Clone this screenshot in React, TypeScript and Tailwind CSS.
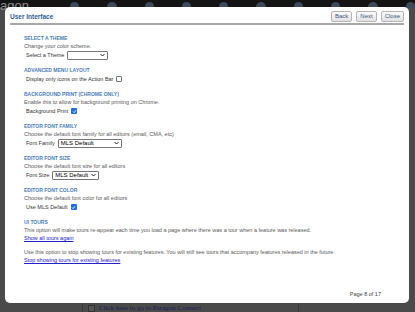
import React from 'react';

function Heading({ children }: { children: React.ReactNode }) {
  return <div className="font-bold uppercase text-[#4a7db8] text-[5px] leading-[8px]">{children}</div>;
}

function Desc({ children }: { children: React.ReactNode }) {
  return <div className="text-[#5a5a5a] text-[5.5px] leading-[8px]">{children}</div>;
}

function Select({ value, width }: { value: string; width: string }) {
  return (
    <div className={`flex items-center justify-between h-[9px] border border-[#767676] rounded-[1px] bg-white px-[2px] ${width}`}>
      <span className="text-[6px] leading-none text-black">{value}</span>
      <svg width="5" height="4" viewBox="0 0 10 8">
        <path d="M1 2 L5 6 L9 2" stroke="#222" strokeWidth="2" fill="none" />
      </svg>
    </div>
  );
}

function Check({ checked }: { checked?: boolean }) {
  return checked ? (
    <div className="w-[6px] h-[6px] rounded-[1px] bg-[#1e6fe6] flex items-center justify-center">
      <svg width="5" height="5" viewBox="0 0 10 10">
        <path d="M2 5 L4.2 7.2 L8 2.5" stroke="white" strokeWidth="1.8" fill="none" />
      </svg>
    </div>
  ) : (
    <div className="w-[6px] h-[6px] rounded-[1px] border border-[#767676] bg-white" />
  );
}

function Row({ children }: { children: React.ReactNode }) {
  return <div className="flex items-center gap-[3px] h-[10px] pl-[2px] text-[5.5px] text-[#333]">{children}</div>;
}

function Button({ label }: { label: string }) {
  return (
    <div className="h-[11px] px-[3px] flex items-center border border-[#b5b5b5] rounded-[2px] bg-gradient-to-b from-[#fafafa] to-[#e2e2e2] text-[6px] text-[#3b5a80]">
      {label}
    </div>
  );
}

export default function App() {
  return (
    <div className="relative w-[415px] h-[312px] overflow-hidden bg-[#4a4a4a]" style={{ fontFamily: '"Liberation Sans", Arial, sans-serif' }}>
      {/* background app */}
      <div className="h-[8px] bg-[#141414] flex items-end gap-[28px] pl-[70px]">
        {[0, 1, 2, 3, 4, 5, 6, 7, 8, 9].map((i) => (
          <div key={i} className="w-[14px] h-[6px] rounded-t-full bg-[#3c4a5c]" />
        ))}
      </div>
      <div className="absolute left-0 top-[-1px] text-[13px] leading-none text-[#8a8a8a]">agon</div>
      <div className="absolute left-[82px] top-[300px] bottom-0 w-[1px] bg-[#3a3a3a]" />
      <div className="absolute left-[88px] top-[305px] w-[7px] h-[7px] bg-[#555] border border-[#333]" />
      <div className="absolute left-[99px] top-[303px] text-[7px] text-[#1b1b5a]" style={{ fontFamily: '"Liberation Serif", serif' }}>
        Click here to go to Paragon Connect
      </div>
      <div className="absolute left-[298px] top-[300px] bottom-0 w-[1px] bg-[#3a3a3a]" />

      {/* modal */}
      <div className="absolute left-[5px] top-[7px] w-[404px] h-[296px] bg-white rounded-[5px] flex flex-col px-[5px]">
        <div className="flex items-center justify-between h-[18px] pt-[3px] border-b-2 border-[#a8a8a8]">
          <div className="font-bold text-[6.5px] text-[#2e5c94]">User Interface</div>
          <div className="flex gap-[4px]">
            <Button label="Back" />
            <Button label="Next" />
            <Button label="Close" />
          </div>
        </div>

        <div className="flex flex-col gap-[6px] pl-[14px] pt-[9px]">
          <div>
            <Heading>Select a Theme</Heading>
            <Desc>Change your color scheme.</Desc>
            <Row>
              <span>Select a Theme</span>
              <Select value="" width="w-[41px]" />
            </Row>
          </div>
          <div>
            <Heading>Advanced Menu Layout</Heading>
            <Row>
              <span>Display only icons on the Action Bar</span>
              <Check />
            </Row>
          </div>
          <div>
            <Heading>Background Print (Chrome Only)</Heading>
            <Desc>Enable this to allow for background printing on Chrome.</Desc>
            <Row>
              <span>Background Print</span>
              <Check checked />
            </Row>
          </div>
          <div>
            <Heading>Editor Font Family</Heading>
            <Desc>Choose the default font family for all editors (email, CMA, etc)</Desc>
            <Row>
              <span>Font Family</span>
              <Select value="MLS Default" width="w-[64px]" />
            </Row>
          </div>
          <div>
            <Heading>Editor Font Size</Heading>
            <Desc>Choose the default font size for all editors</Desc>
            <Row>
              <span>Font Size</span>
              <Select value="MLS Default" width="w-[47px]" />
            </Row>
          </div>
          <div>
            <Heading>Editor Font Color</Heading>
            <Desc>Choose the default font color for all editors</Desc>
            <Row>
              <span>Use MLS Default</span>
              <Check checked />
            </Row>
          </div>
          <div>
            <Heading>UI Tours</Heading>
            <Desc>This option will make tours re-appear each time you load a page where there was a tour when a feature was released.</Desc>
            <div className="text-[5.5px] leading-[8px] text-[#2222cc] underline">Show all tours again</div>
          </div>
          <div>
            <Desc>Use this option to stop showing tours for existing features. You will still see tours that accompany features released in the future.</Desc>
            <div className="text-[5.5px] leading-[8px] text-[#2222cc] underline">Stop showing tours for existing features</div>
          </div>
        </div>

        <div className="mt-auto mb-[5px] self-end pr-[23px] text-[5.5px] text-[#444]">Page 8 of 17</div>
      </div>
    </div>
  );
}
